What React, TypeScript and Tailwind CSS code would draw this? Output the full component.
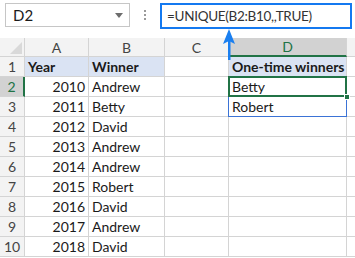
import React from "react";

const cols = ["A", "B", "C", "D"];
const rows: [string, string][] = [
  ["2010", "Andrew"],
  ["2011", "Betty"],
  ["2012", "David"],
  ["2013", "Andrew"],
  ["2014", "Andrew"],
  ["2015", "Robert"],
  ["2016", "David"],
  ["2017", "Andrew"],
  ["2018", "David"],
];
const unique = ["Betty", "Robert"];

const cell = "border-r border-b border-[#d4d4d4] h-[20px] leading-[20px] px-[3px] whitespace-nowrap overflow-hidden";

export default function App() {
  return (
    <div
      className="relative w-[355px] h-[258px] bg-white overflow-hidden text-[#1a1a1a]"
      style={{ fontFamily: "Lato, 'Liberation Sans', sans-serif" }}
    >
      {/* FORMULA BAR */}
      <div className="flex items-start h-[38px] pt-[3px] pl-[5px]">
        <div className="flex items-center justify-between w-[125px] h-[24px] border border-[#c6c6c6] pl-[7px] pr-[6px] text-[15px]">
          <span>D2</span>
          <span className="w-0 h-0 border-l-[4px] border-r-[4px] border-t-[5px] border-l-transparent border-r-transparent border-t-[#6d6d6d]"></span>
        </div>
        <div className="flex flex-col items-center justify-center gap-[2px] w-[30px] h-[24px]">
          <span className="w-[2px] h-[2px] bg-[#9a9a9a]"></span>
          <span className="w-[2px] h-[2px] bg-[#9a9a9a]"></span>
          <span className="w-[2px] h-[2px] bg-[#9a9a9a]"></span>
        </div>
        <div className="w-[192px] h-[26px] border-2 border-[#1479f0] pl-[5px] leading-[22px] text-[13.5px] tracking-[-0.3px] text-[#333]">
          =UNIQUE(B2:B10,,TRUE)
        </div>
      </div>

      {/* GRID */}
      <div className="grid grid-cols-[25px_64px_76px_64px_118px_8px] text-[14px]">
        {/* column headers */}
        <div className="relative h-[19px] bg-[#f3f3f3] border-r border-b border-[#d4d4d4]">
          <svg className="absolute right-[2px] bottom-[2px]" width="12" height="12" viewBox="0 0 12 12">
            <path d="M12 0 L12 12 L0 12 Z" fill="#d9d9d9" />
          </svg>
        </div>
        {cols.map((c) =>
          c === "D" ? (
            <div key={c} className="h-[19px] leading-[18px] text-center bg-[#d2d2d2] text-[#217346] border-r border-[#d4d4d4] border-b-2 border-b-[#217346]">
              {c}
            </div>
          ) : (
            <div key={c} className="h-[19px] leading-[19px] text-center bg-[#f3f3f3] text-[#444] border-r border-b border-[#d4d4d4]">
              {c}
            </div>
          )
        )}
        <div className="h-[19px] bg-[#f3f3f3] border-b border-[#d4d4d4]"></div>

        {/* row 1 */}
        <div className="h-[20px] leading-[20px] text-center bg-[#f3f3f3] text-[#444] border-r border-b border-[#d4d4d4]">1</div>
        <div className={`${cell} bg-[#dae3f3] font-bold`}>Year</div>
        <div className={`${cell} bg-[#dae3f3] font-bold`}>Winner</div>
        <div className={cell}></div>
        <div className={`${cell} bg-[#dae3f3] font-bold`}>One-time winners</div>
        <div className="border-b border-[#d4d4d4]"></div>

        {rows.map(([year, name], i) => {
          const n = i + 2;
          const sel = n === 2;
          return (
            <React.Fragment key={n}>
              <div
                className={
                  sel
                    ? "h-[20px] leading-[20px] text-center bg-[#d2d2d2] text-[#217346] border-r-2 border-r-[#217346] border-b border-[#d4d4d4]"
                    : "h-[20px] leading-[20px] text-center bg-[#f3f3f3] text-[#444] border-r border-b border-[#d4d4d4]"
                }
              >
                {n}
              </div>
              <div className={`${cell} text-right`}>{year}</div>
              <div className={cell}>{name}</div>
              <div className={cell}></div>
              {sel ? (
                <div className={`${cell} relative overflow-visible`}>
                  {unique[0]}
                  <span className="absolute -left-[1px] -top-[1px] -right-[1px] -bottom-[1px] border-2 border-[#217346]"></span>
                  <span className="absolute -right-[4px] -bottom-[4px] w-[6px] h-[6px] bg-[#217346] border border-white"></span>
                </div>
              ) : n === 3 ? (
                <div className="h-[20px] leading-[20px] px-[3px] border-l border-r border-b border-[#3b73d6] -ml-[1px]">
                  {unique[1]}
                </div>
              ) : (
                <div className={cell}></div>
              )}
              <div className="border-b border-[#d4d4d4]"></div>
            </React.Fragment>
          );
        })}
      </div>

      {/* ARROW */}
      <svg className="absolute left-[220px] top-[28px]" width="18" height="32" viewBox="0 0 18 32">
        <rect x="8" y="12" width="2.5" height="20" fill="#1a7ff0" />
        <path d="M9 1 L15 16 L9 13 L3 16 Z" fill="#1a7ff0" />
      </svg>
    </div>
  );
}
